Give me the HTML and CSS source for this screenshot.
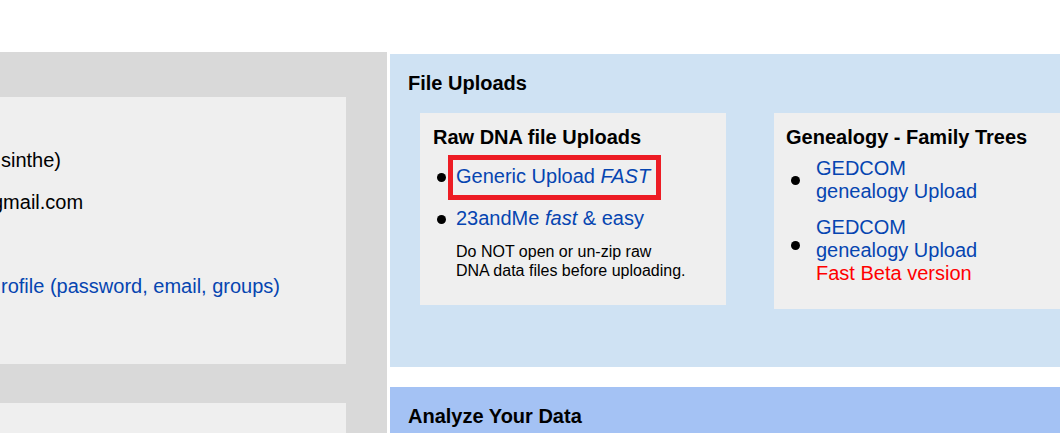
FILE: index.html
```html
<!DOCTYPE html>
<html lang="en">
<head>
<meta charset="utf-8">
<title>File Uploads</title>
<link rel="stylesheet" href="styles.css">
</head>
<body>
<div class="page">
  <aside class="sidebar">
    <section class="profile">
      <p class="row">sinthe)</p>
      <p class="row row-email">gmail.com</p>
      <p class="row row-link"><a href="#profile">rofile (password, email, groups)</a></p>
    </section>
    <section class="profile profile-next"></section>
  </aside>
  <main class="main">
    <section class="panel panel-uploads">
      <h2 class="title">File Uploads</h2>
      <div class="cards">
        <section class="card card-raw">
          <h3 class="title">Raw DNA file Uploads</h3>
          <ul class="list list-raw">
            <li class="item"><a class="highlight" href="#generic">Generic Upload <em>FAST</em></a></li>
            <li class="item"><a href="#23andme">23andMe <em>fast</em> &amp; easy</a></li>
          </ul>
          <p class="note">Do NOT open or un-zip raw<br>DNA data files before uploading.</p>
        </section>
        <section class="card card-trees">
          <h3 class="title">Genealogy - Family Trees</h3>
          <ul class="list list-trees">
            <li class="item"><a href="#gedcom">GEDCOM<br>genealogy Upload</a></li>
            <li class="item item-beta"><a href="#gedcom-beta">GEDCOM<br>genealogy Upload<br><span class="beta">Fast Beta version</span></a></li>
          </ul>
        </section>
      </div>
    </section>
    <section class="panel panel-analyze">
      <h2 class="title">Analyze Your Data</h2>
    </section>
  </main>
</div>
</body>
</html>
```

FILE: styles.css
```css
* { box-sizing: border-box; }

html, body { height: 100%; }

body {
  margin: 0;
  overflow: hidden;
  background: #fff;
  color: #000;
  font: 20px/23px "Liberation Sans", Arial, sans-serif;
}

h2, h3, p, ul { margin: 0; padding: 0; }

a { color: #0645b1; text-decoration: none; }

.page {
  display: grid;
  grid-template-columns: 387fr 670fr;
  gap: 3px;
  min-height: 100%;
  padding-top: 52px;
}

.sidebar {
  display: flex;
  flex-direction: column;
  gap: 39px;
  padding: 45px 41px 0 0;
  background: #d9d9d9;
}

.profile {
  padding: 42px 0 57px 1px;
  overflow: hidden;
  background: #efefef;
}

.profile-next { flex: 1; padding: 0; }

.row { line-height: 42px; white-space: nowrap; }
.row-email { margin-left: -9px; }
.row-link { margin-top: 42px; }

.main {
  display: flex;
  flex-direction: column;
  gap: 20px;
  min-width: 0;
  padding-top: 2px;
}

.panel { padding: 18px 0 0 18px; }
.panel-uploads { padding-bottom: 58px; background: #cfe2f3; }
.panel-analyze { flex: 1; background: #a4c2f4; }

.title { font-size: 20px; font-weight: bold; }

.cards {
  display: grid;
  grid-template-columns: 306fr 286fr;
  align-items: start;
  gap: 48px;
  margin: 18px 0 0 12px;
}

.card { padding: 13px 12px 24px; background: #efefef; }
.card-raw { padding: 13px 12px 25px 13px; }

.list { display: grid; list-style: none; }
.list-raw { gap: 19px; margin-top: 16px; }
.list-trees { gap: 13px; margin-top: 8px; }

.item { display: flex; align-items: center; white-space: nowrap; }

.item::before {
  content: "";
  flex: none;
  width: 9px;
  height: 9px;
  margin: 2px 10px 0 4px;
  border-radius: 50%;
  background: #000;
}

.list-trees .item::before { margin: 0 16px 0 5px; }
.list-trees .item-beta::before { margin-bottom: 10px; }

.highlight { position: relative; }

.highlight::after {
  content: "";
  position: absolute;
  inset: -10px -11px -12px -8px;
  border: 5px solid #ed1c24;
}

.note {
  margin: 12px 0 0 23px;
  font-size: 16px;
  line-height: 19px;
  white-space: nowrap;
}

.beta { color: #f00; }
```
